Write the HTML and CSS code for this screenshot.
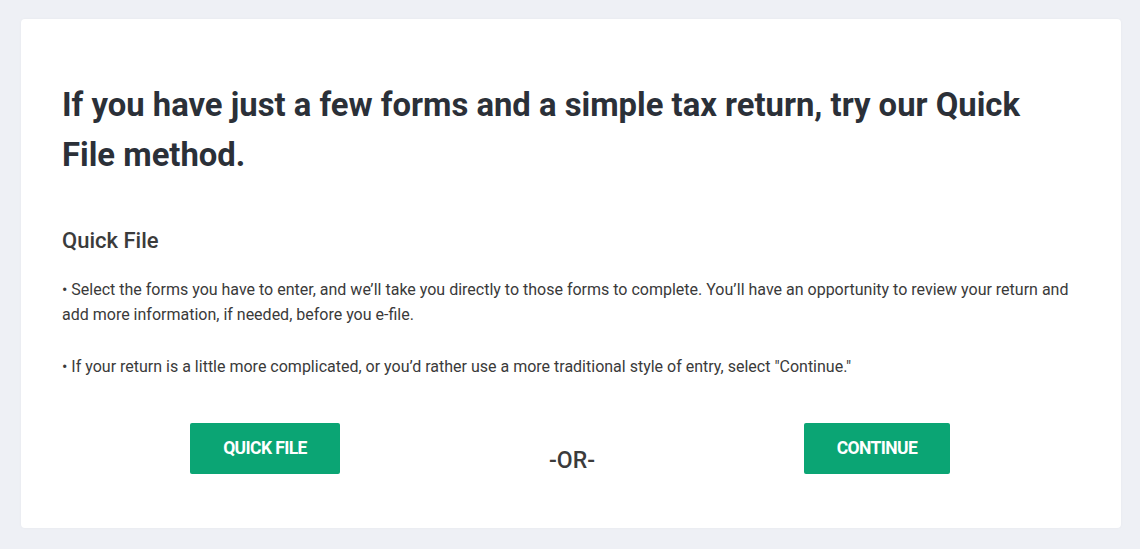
FILE: index.html
```html
<!DOCTYPE html>
<html>
  <head>
    <title>Quick File</title>
    <link rel="stylesheet" href="styles.css">
  </head>
  <body>
    <div class="card">
      <h1>If you have just a few forms and a simple tax return, try our Quick File method.</h1>

      <h2>Quick File</h2>
      <p>&bull; Select the forms you have to enter, and we&rsquo;ll take you directly to those forms to complete. You&rsquo;ll have an opportunity to review your return and add more information, if needed, before you e-file.</p>
      <p>&bull; If your return is a little more complicated, or you&rsquo;d rather use a more traditional style of entry, select "Continue."</p>

      <!-- Choice buttons -->
      <div class="choices">
        <button class="btn btn-quick">Quick File</button>
        <span class="or">-OR-</span>
        <button class="btn btn-continue">Continue</button>
      </div>
    </div>
  </body>
</html>
```

FILE: styles.css
```css
body {
  margin: 0;
  padding: 19px 19px 21px 21px;
  background-color: #eef0f5;
  font-family: Roboto, "Liberation Sans", Arial, sans-serif;
  color: #333;
}
.card {
  background-color: #fff;
  border-radius: 4px;
  padding: 61px 41px 54px 41px;
  box-shadow: 0 0 3px rgba(0, 0, 0, 0.04);
}
h1 {
  font-size: 32.8px;
  font-weight: 700;
  line-height: 50px;
  color: #2b3038;
  margin: 0;
}
h2 {
  font-size: 22px;
  font-weight: 500;
  color: #3b3b3b;
  margin: 47px 0 0 0;
  line-height: 28px;
}
p {
  font-size: 16px;
  line-height: 25px;
  color: #3a3a3a;
  margin: 22px 0 0 0;
}
p + p {
  margin-top: 27px;
}
.choices {
  display: flex;
  justify-content: space-between;
  align-items: flex-start;
  padding: 0 130px 0 128px;
  margin-top: 44px;
}
.btn {
  border: none;
  border-radius: 2px;
  background-color: #0ba574;
  color: #fff;
  font-family: Roboto, "Liberation Sans", Arial, sans-serif;
  font-size: 17.5px;
  font-weight: 700;
  letter-spacing: -0.6px;
  text-transform: uppercase;
  height: 51px;
  padding-bottom: 2px;
}
.btn-quick {
  width: 150px;
}
.btn-continue {
  width: 146px;
}
.or {
  font-size: 23px;
  font-weight: 500;
  color: #3b3b3b;
  margin-top: 24px;
}
```
